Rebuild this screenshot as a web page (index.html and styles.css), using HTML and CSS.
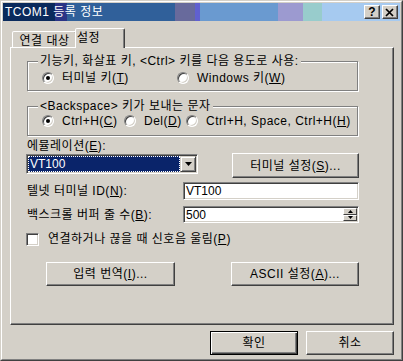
FILE: index.html
```html
<!DOCTYPE html>
<html lang="ko">
<head>
    <meta charset="UTF-8">
    <title>TCOM1 등록 정보</title>
    <link rel="stylesheet" href="styles.css">
</head>
<body>
    <div class="window">
        <div class="frame">
            <div class="titlebar">
                <span class="title">TCOM1 등록 정보</span>
                <div class="caption-btns">
                    <div class="cap-btn help">?</div>
                    <div class="cap-btn">
                        <svg width="10" height="9" viewBox="0 0 10 9"><path d="M1 1l7 7M8 1l-7 7" stroke="#000" stroke-width="1.7" fill="none"/></svg>
                    </div>
                </div>
            </div>

            <div class="body">
                <div class="tabs">
                    <div class="tab">연결 대상</div>
                    <div class="tab active">설정</div>
                </div>

                <div class="panel">
                    <fieldset class="group g1">
                        <legend>기능키, 화살표 키, &lt;Ctrl&gt; 키를 다음 용도로 사용:</legend>
                        <div class="radios r1">
                            <label class="radio"><span class="dot checked"></span><span>터미널 키(<u>T</u>)</span></label>
                            <label class="radio"><span class="dot"></span><span>Windows 키(<u>W</u>)</span></label>
                        </div>
                    </fieldset>

                    <fieldset class="group g2">
                        <legend>&lt;Backspace&gt; 키가 보내는 문자</legend>
                        <div class="radios r2">
                            <label class="radio"><span class="dot checked"></span><span>Ctrl+H(<u>C</u>)</span></label>
                            <label class="radio"><span class="dot"></span><span>Del(<u>D</u>)</span></label>
                            <label class="radio"><span class="dot"></span><span>Ctrl+H, Space, Ctrl+H(<u>H</u>)</span></label>
                        </div>
                    </fieldset>

                    <div class="fields">
                        <div class="row row-emu">
                            <div class="emu-col">
                                <div class="label">에뮬레이션(<u>E</u>):</div>
                                <div class="combo">
                                    <div class="combo-value"><span>VT100</span></div>
                                    <div class="combo-btn">
                                        <svg width="7" height="4" viewBox="0 0 7 4"><path d="M0 0h7L3.5 4z" fill="#000"/></svg>
                                    </div>
                                </div>
                            </div>
                            <div class="btn btn-term"><span>터미널 설정(<u>S</u>)...</span></div>
                        </div>

                        <div class="row row-id">
                            <div class="label">텔넷 터미널 ID(<u>N</u>):</div>
                            <div class="textbox tb-id">VT100</div>
                        </div>

                        <div class="row row-buf">
                            <div class="label">백스크롤 버퍼 줄 수(<u>B</u>):</div>
                            <div class="textbox tb-buf">
                                <span class="tb-text">500</span>
                                <div class="spin">
                                    <div class="spin-btn"><svg width="5" height="3" viewBox="0 0 5 3"><path d="M2.5 0L5 3H0z" fill="#000"/></svg></div>
                                    <div class="spin-btn"><svg width="5" height="3" viewBox="0 0 5 3"><path d="M0 0h5L2.5 3z" fill="#000"/></svg></div>
                                </div>
                            </div>
                        </div>

                        <div class="row row-check">
                            <span class="checkbox"></span>
                            <span class="label">연결하거나 끊을 때 신호음 울림(<u>P</u>)</span>
                        </div>

                        <div class="row row-btns">
                            <div class="btn btn-input"><span>입력 번역(<u>I</u>)...</span></div>
                            <div class="btn btn-ascii"><span>ASCII 설정(<u>A</u>)...</span></div>
                        </div>
                    </div>
                </div>

                <div class="footer">
                    <div class="btn btn-foot default">확인</div>
                    <div class="btn btn-foot">취소</div>
                </div>
            </div>
        </div>
    </div>
</body>
</html>
```

FILE: styles.css
```css
body {
    margin: 0;
    font-family: "Liberation Sans", "Noto Sans CJK KR", sans-serif;
    font-size: 12px;
    line-height: 14px;
    letter-spacing: 0.5px;
    color: #000;
    background: #d4d0c8;
}
u {
    text-decoration: underline;
    text-underline-offset: 1px;
}
.window {
    width: 403px;
    height: 361px;
    box-sizing: border-box;
    border: 1px solid;
    border-color: #d4d0c8 #404040 #404040 #d4d0c8;
    background: #d4d0c8;
}
.frame {
    height: 100%;
    box-sizing: border-box;
    border: 1px solid;
    border-color: #fff #808080 #808080 #fff;
    padding: 1px;
}
.titlebar {
    height: 18px;
    display: flex;
    align-items: center;
    justify-content: space-between;
    padding: 0 2px 0 2px;
    background: linear-gradient(to right,
        #0a2a5c 0, #0a2a5c 52px,
        #2a3486 52px, #2a3486 64px,
        #30609a 64px, #30609a 172px,
        #686a9c 172px, #686a9c 192px,
        #6060d0 192px, #6060d0 197px,
        #6a9ad0 197px, #6a9ad0 275px,
        #9c9ad0 275px, #9c9ad0 300px,
        #98cccc 300px, #98cccc 319px,
        #a6caf0 319px);
}
.title {
    color: #fff;
    font-size: 12px;
}
.caption-btns {
    display: flex;
    gap: 2px;
}
.cap-btn {
    width: 16px;
    height: 14px;
    box-sizing: border-box;
    border: 1px solid;
    border-color: #fff #404040 #404040 #fff;
    box-shadow: inset -1px -1px 0 #808080;
    background: #d4d0c8;
    display: flex;
    align-items: center;
    justify-content: center;
}
.cap-btn.help {
    font-weight: bold;
    font-size: 12px;
    line-height: 12px;
    letter-spacing: 0;
}

.body {
    padding: 7px 6px 0 7px;
}
.tabs {
    display: flex;
    align-items: flex-end;
    padding-left: 2px;
}
.tab {
    height: 16px;
    box-sizing: border-box;
    width: 65px;
    padding-top: 2px;
    text-align: center;
    border: 1px solid;
    border-bottom: none;
    border-color: #fff #404040 transparent #fff;
    box-shadow: inset -1px 0 0 #808080;
    border-radius: 2px 2px 0 0;
    background: #d4d0c8;
    white-space: nowrap;
}
.tab.active {
    position: relative;
    z-index: 1;
    width: 50px;
    height: 20px;
    margin-left: -2px;
    margin-bottom: -1px;
    padding-top: 2px;
    padding-left: 1px;
    text-align: left;
}

.panel {
    height: 278px;
    box-sizing: border-box;
    border: 1px solid;
    border-color: #fff #404040 #404040 #fff;
    box-shadow: inset -1px -1px 0 #808080;
    padding: 6px 0 0 16px;
}
.group {
    margin: 0;
    padding: 0;
    width: 331px;
    box-sizing: border-box;
    border: 1px solid #808080;
    box-shadow: inset 1px 1px 0 #fff, 1px 1px 0 #fff;
    min-width: 0;
}
.group legend {
    padding: 0 2px;
    margin-left: 10px;
    line-height: 14px;
    background: #d4d0c8;
    white-space: nowrap;
}
.g1 {
    padding-bottom: 5px;
}
.g2 {
    margin-top: 8px;
    padding-bottom: 7px;
}
.radios {
    display: grid;
    padding-left: 14px;
}
.r1 {
    margin-top: 3px;
    grid-template-columns: 135px auto;
}
.r2 {
    margin-top: 1px;
    grid-template-columns: 82px 62px auto;
}
.radio {
    display: flex;
    align-items: center;
    gap: 8px;
    height: 14px;
    white-space: nowrap;
}
.dot {
    position: relative;
    flex: none;
    width: 12px;
    height: 12px;
    box-sizing: border-box;
    border-radius: 50%;
    background: #fff;
    border: 1px solid;
    border-color: #808080 #fff #fff #808080;
    box-shadow: inset 1px 1px 0 #404040, inset -1px -1px 0 #d4d0c8;
}
.dot.checked::after {
    content: "";
    position: absolute;
    left: 3px;
    top: 3px;
    width: 4px;
    height: 4px;
    border-radius: 50%;
    background: #000;
}

.fields {
    margin-left: -1px;
    width: 333px;
}
.row {
    display: flex;
    justify-content: space-between;
    align-items: center;
}
.label {
    padding-left: 1px;
    white-space: nowrap;
}
.row-emu {
    margin-top: 3px;
    align-items: flex-start;
}
.emu-col .combo {
    margin-top: 1px;
}
.combo {
    width: 172px;
    height: 20px;
    box-sizing: border-box;
    border: 1px solid;
    border-color: #808080 #fff #fff #808080;
    box-shadow: inset 1px 1px 0 #404040, inset -1px -1px 0 #d4d0c8;
    padding: 1px;
    display: flex;
    background: #fff;
}
.combo-value {
    flex: 1;
    background: #0a246a;
    color: #fff;
    outline: 1px dotted #fff;
    outline-offset: -1px;
    padding-left: 2px;
    line-height: 16px;
    letter-spacing: 0;
}
.combo-btn {
    width: 16px;
    box-sizing: border-box;
    border: 1px solid;
    border-color: #d4d0c8 #404040 #404040 #d4d0c8;
    box-shadow: inset 1px 1px 0 #fff, inset -1px -1px 0 #808080;
    background: #d4d0c8;
    display: flex;
    align-items: center;
    justify-content: center;
}
.btn {
    box-sizing: border-box;
    border: 1px solid;
    border-color: #fff #404040 #404040 #fff;
    box-shadow: inset -1px -1px 0 #808080;
    background: #d4d0c8;
    display: flex;
    align-items: center;
    justify-content: center;
    white-space: nowrap;
}
.btn-term {
    width: 127px;
    height: 25px;
    margin-top: 14px;
}
.textbox {
    width: 176px;
    box-sizing: border-box;
    border: 1px solid;
    border-color: #808080 #fff #fff #808080;
    box-shadow: inset 1px 1px 0 #404040, inset -1px -1px 0 #d4d0c8;
    background: #fff;
    padding-left: 2px;
    display: flex;
    align-items: center;
    letter-spacing: 0;
}
.tb-id {
    height: 18px;
}
.row-id {
    margin-top: 4px;
}
.row-buf {
    margin-top: 6px;
}
.tb-buf {
    height: 17px;
    padding: 1px;
    padding-left: 2px;
}
.tb-text {
    flex: 1;
}
.spin {
    width: 14px;
    height: 100%;
    display: flex;
    flex-direction: column;
}
.spin-btn {
    flex: 1;
    box-sizing: border-box;
    border: 1px solid;
    border-color: #fff #404040 #404040 #fff;
    background: #d4d0c8;
    display: flex;
    align-items: center;
    justify-content: center;
}
.row-check {
    margin-top: 9px;
    justify-content: flex-start;
    gap: 8px;
}
.checkbox {
    width: 13px;
    height: 13px;
    box-sizing: border-box;
    border: 1px solid;
    border-color: #808080 #fff #fff #808080;
    box-shadow: inset 1px 1px 0 #404040, inset -1px -1px 0 #d4d0c8;
    background: #fff;
}
.row-btns {
    margin-top: 16px;
    padding-left: 20px;
}
.row-btns .btn {
    height: 24px;
}
.btn-input {
    width: 129px;
}
.btn-ascii {
    width: 128px;
}

.footer {
    display: flex;
    justify-content: flex-end;
    gap: 8px;
    margin-top: 6px;
}
.btn-foot {
    width: 88px;
    height: 24px;
}
.btn-foot.default {
    border: 1px solid #000;
    box-shadow: inset 1px 1px 0 #fff, inset -1px -1px 0 #404040, inset -2px -2px 0 #808080;
}
```
